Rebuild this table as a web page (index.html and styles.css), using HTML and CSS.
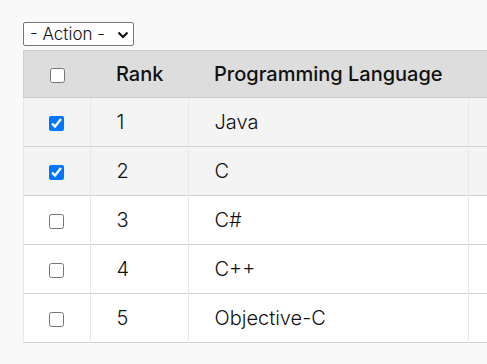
FILE: index.html
```html
<!DOCTYPE html>
<html lang="en">
<head>
<meta charset="utf-8">
<link rel="stylesheet" href="styles.css">
</head>
<body>
<div class="page">
  <div class="select-wrap">
    <select class="action">
      <option>- Action -</option>
    </select>
    <svg class="chev" width="12" height="8" viewBox="0 0 12 8"><path d="M1.5 1.5 L6 6 L10.5 1.5" fill="none" stroke="#111" stroke-width="2.2"/></svg>
  </div>
  <table class="grid">
    <thead>
      <tr>
        <th class="c-check"><input type="checkbox" class="cb"></th>
        <th class="c-rank">Rank</th>
        <th class="c-lang">Programming Language</th>
        <th class="c-extra"></th>
      </tr>
    </thead>
    <tbody>
      <tr class="sel"><td class="c-check"><input type="checkbox" class="cb" checked></td><td>1</td><td>Java</td><td></td></tr>
      <tr class="sel"><td class="c-check"><input type="checkbox" class="cb" checked></td><td>2</td><td>C</td><td></td></tr>
      <tr><td class="c-check"><input type="checkbox" class="cb"></td><td>3</td><td>C#</td><td></td></tr>
      <tr><td class="c-check"><input type="checkbox" class="cb"></td><td>4</td><td>C++</td><td></td></tr>
      <tr><td class="c-check"><input type="checkbox" class="cb"></td><td>5</td><td>Objective-C</td><td></td></tr>
    </tbody>
  </table>
</div>
</body>
</html>
```
FILE: styles.css
```css
html, body {
  margin: 0;
  padding: 0;
  overflow: hidden;
  background: #f9f9f9;
}
body {
  font-family: Inter, "Noto Sans", sans-serif;
  color: #222;
}
.page {
  padding: 22px 0 0 23px;
}
.select-wrap {
  position: relative;
  width: 111px;
  height: 24px;
  margin: 0 0 4px 0;
}
.action {
  display: block;
  width: 111px;
  height: 24px;
  margin: 0;
  -webkit-appearance: none;
  appearance: none;
  font-family: Inter, sans-serif;
  font-size: 17px;
  font-weight: 300;
  color: #111;
  background: #fff;
  border: 1px solid #767676;
  border-radius: 2px;
  padding: 0 0 0 6px;
}
.chev {
  position: absolute;
  left: 117px;
  left: 94px;
  top: 9px;
  pointer-events: none;
}
.grid {
  border-collapse: collapse;
  border: 1px solid #cfcfcf;
  table-layout: fixed;
  width: 540px;
}
.grid th {
  background: #dddddd;
  height: 46px;
  padding: 0 0 0 26px;
  text-align: left;
  font-weight: 500;
  font-size: 20px;
  color: #111;
  border-bottom: 1px solid #c8c8c8;
}
.grid td {
  height: 48px;
  padding: 0 0 0 26px;
  font-size: 20px;
  font-weight: 300;
  color: #111;
  border-top: 1px solid #d0d0d0;
  border-left: 1px solid #e8e8e8;
  border-right: 1px solid #e8e8e8;
  background: #fff;
}
.grid tr.sel td {
  background: #f4f4f4;
}
.c-check { width: 66px; }
.c-rank { width: 72px; }
.c-lang { width: 254px; }
.grid .c-check {
  padding: 0;
  text-align: center;
}
.cb {
  width: 15px;
  height: 15px;
  margin: 0;
  vertical-align: middle;
}
```
